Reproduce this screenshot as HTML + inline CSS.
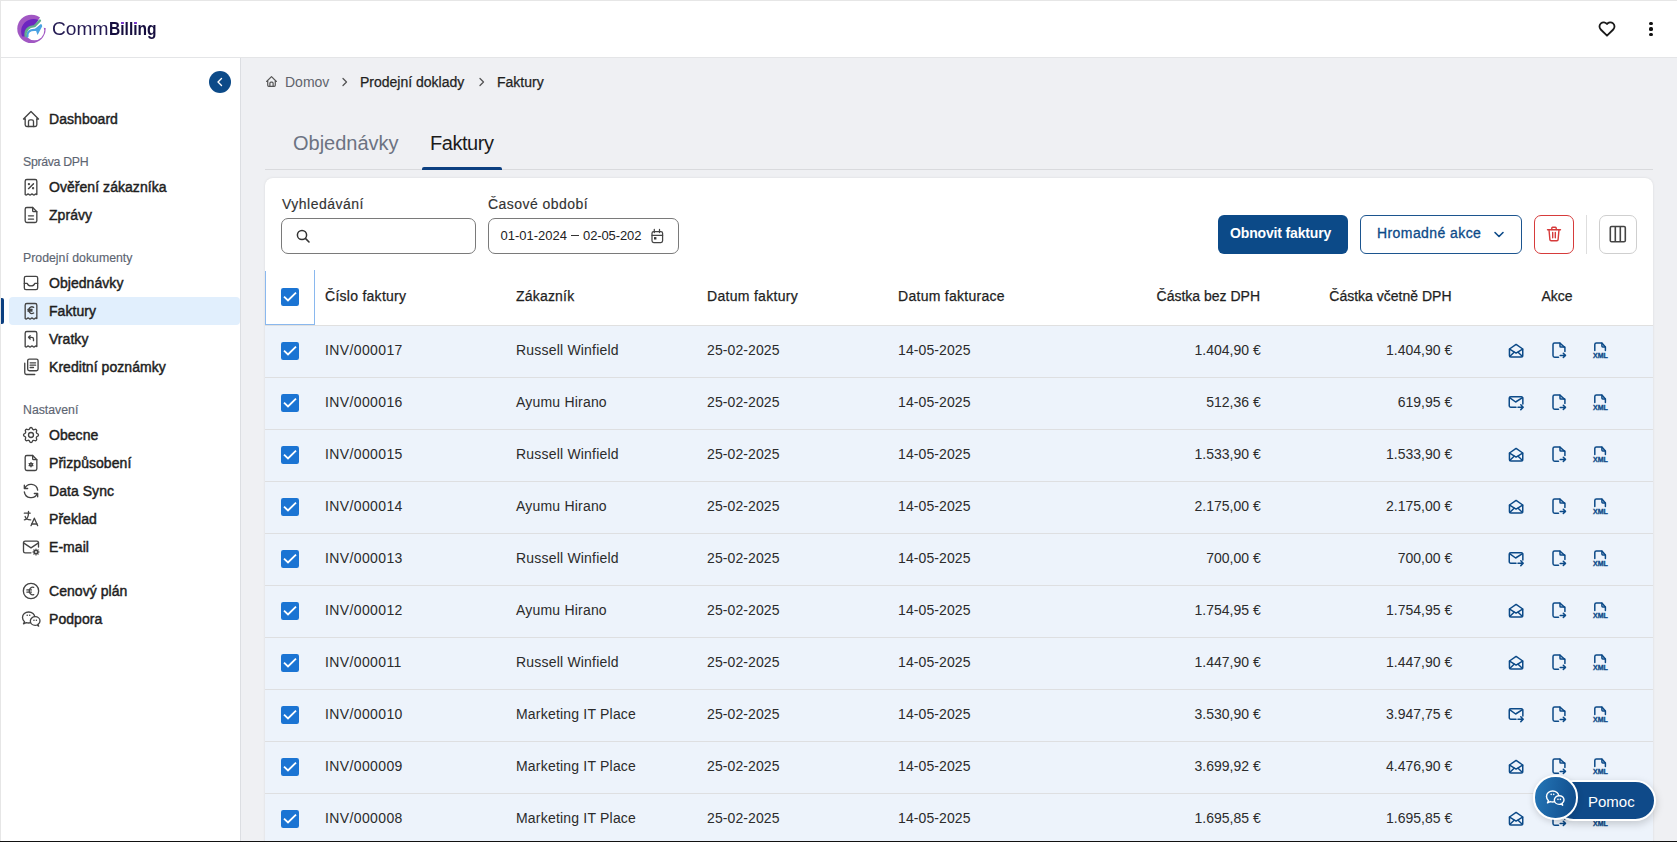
<!DOCTYPE html>
<html><head><meta charset="utf-8"><style>
*{box-sizing:border-box;margin:0;padding:0}
html,body{width:1677px;height:842px;overflow:hidden}
body{font-family:"Liberation Sans",sans-serif;background:#eff0f3;position:relative;color:#222}
.a{position:absolute;white-space:nowrap}
svg{display:block;overflow:visible}
.sb{fill:none;stroke:#444;stroke-width:1.6;stroke-linecap:round;stroke-linejoin:round}
.nt{font-size:14px;line-height:16px;color:#1e1e1e;-webkit-text-stroke:0.45px #1e1e1e;letter-spacing:0.05px}
.sec{font-size:12.3px;line-height:14px;color:#5d6572;-webkit-text-stroke:0.15px #5d6572}
.th{font-size:14px;line-height:16px;color:#1f1f1f;-webkit-text-stroke:0.25px #1f1f1f}
.td{font-size:14px;line-height:16px;color:#2b2b2b;letter-spacing:0.2px}
.cb{width:18px;height:18px;background:#1b74d3;border-radius:2px}
.ai{fill:none;stroke:#0c4a88;stroke-width:2;stroke-linecap:round;stroke-linejoin:round}
.ai2{fill:none;stroke:#0c4a88;stroke-width:1.5;stroke-linecap:round;stroke-linejoin:round}
</style></head><body>
<div class="a" style="left:0;top:0;width:1677px;height:1px;background:#e6e6e6"></div>
<div class="a" style="left:0;top:0;width:1px;height:842px;background:#e6e6e6"></div>
<div class="a" style="left:1px;top:1px;width:1676px;height:56px;background:#fff"></div>
<div class="a" style="left:1px;top:57px;width:1676px;height:1px;background:#e4e5e7"></div>
<div class="a" style="left:1px;top:58px;width:239px;height:783px;background:#fff"></div>
<div class="a" style="left:240px;top:58px;width:1px;height:783px;background:#dcdee2"></div>
<svg class="a" style="left:15px;top:13px" width="33" height="33" viewBox="0 0 842 842">
<defs><mask id="lm"><rect width="842" height="842" fill="#000"/><circle cx="420" cy="405" r="362" fill="#fff"/><polygon points="500,330 690,30 842,0 842,385 760,385" fill="#000"/></mask>
<clipPath id="lc"><path d="M272 585 C258 440 330 350 500 335 L635 195 L842 195 L842 842 L0 842 L0 585Z"/></clipPath></defs>
<g mask="url(#lm)"><rect width="842" height="842" fill="#a157c3"/><circle cx="475" cy="470" r="318" fill="#6c25c0"/><rect x="0" y="600" width="842" height="300" fill="#a157c3"/><rect x="600" y="380" width="300" height="500" fill="#a157c3"/><circle cx="497" cy="448" r="250" fill="#fff" clip-path="url(#lc)"/></g>
<path d="M318 605 C300 480 380 420 520 430 L665 315" fill="none" stroke="#4aa2e2" stroke-width="55" stroke-linecap="round"/>
<polygon points="520,410 660,285 695,340 575,560" fill="#4aa2e2"/>
<path d="M272 585 C258 440 330 350 500 335 L635 195" fill="none" stroke="#62ad8d" stroke-width="62" stroke-linecap="round"/>
</svg>
<div class="a" style="left:52px;top:18.70px;font-size:17.6px;line-height:20px;color:#241a52;transform:scaleX(1.09);transform-origin:0 0">Comm</div>
<div class="a" style="left:108.5px;top:18.70px;font-size:17.6px;line-height:20px;color:#150d3e;font-weight:bold;transform:scaleX(0.885);transform-origin:0 0">Billing</div>
<div class="a" style="left:120.6px;top:21.6px;width:3px;height:2.6px;background:#7a2fd6;border-radius:1px"></div>
<div class="a" style="left:133.6px;top:21.6px;width:3px;height:2.6px;background:#7a2fd6;border-radius:1px"></div>
<svg class="a" style="left:1597px;top:19px" width="20" height="20" viewBox="0 0 24 24"><path d="M19.5 12.572l-7.5 7.428l-7.5 -7.428a5 5 0 1 1 7.5 -6.566a5 5 0 1 1 7.5 6.572" fill="none" stroke="#1a1a1a" stroke-width="2.2" stroke-linecap="round" stroke-linejoin="round"/></svg>
<div class="a" style="left:1649.4px;top:21.599999999999998px;width:3.2px;height:3.2px;border-radius:50%;background:#111"></div>
<div class="a" style="left:1649.4px;top:27.4px;width:3.2px;height:3.2px;border-radius:50%;background:#111"></div>
<div class="a" style="left:1649.4px;top:33.199999999999996px;width:3.2px;height:3.2px;border-radius:50%;background:#111"></div>
<div class="a" style="left:209px;top:71px;width:22px;height:22px;border-radius:50%;background:#0c4a88"></div>
<svg class="a" style="left:209px;top:71px" width="22" height="22" viewBox="0 0 22 22"><path d="M12.5 7.5 L9 11 L12.5 14.5" fill="none" stroke="#fff" stroke-width="1.4" stroke-linecap="round" stroke-linejoin="round"/></svg>
<div class="a" style="left:9px;top:297px;width:231px;height:28px;background:#e1effd;border-radius:4px"></div>
<div class="a" style="left:1px;top:298px;width:3px;height:26px;background:#0c3f80;border-radius:0 2px 2px 0"></div>
<svg class="a sb" style="left:21px;top:109px" width="20" height="20" viewBox="0 0 24 24"><path d="M5 12l-2 0l9 -9l9 9l-2 0"/><path d="M5 12v7a2 2 0 0 0 2 2h10a2 2 0 0 0 2 -2v-7"/><path d="M9 21v-6a2 2 0 0 1 2 -2h2a2 2 0 0 1 2 2v6"/></svg>
<div class="a nt" style="left:49px;top:111.15px">Dashboard</div>
<div class="a sec" style="left:23px;top:154.84px;letter-spacing:-0.3px">Správa DPH</div>
<svg class="a sb" style="left:21px;top:177px" width="20" height="20" viewBox="0 0 24 24"><path d="M5 21v-16a2 2 0 0 1 2 -2h10a2 2 0 0 1 2 2v16q-1.17 -1.3 -2.33 0t-2.33 0t-2.33 0t-2.33 0t-2.33 0t-2.33 0"/><path d="M9 14l6 -6"/><circle cx="9.5" cy="8.5" r=".6"/><circle cx="14.5" cy="13.5" r=".6"/></svg>
<div class="a nt" style="left:49px;top:179.15px">Ověření zákazníka</div>
<svg class="a sb" style="left:21px;top:205px" width="20" height="20" viewBox="0 0 24 24"><path d="M14 3v4a1 1 0 0 0 1 1h4"/><path d="M17 21h-10a2 2 0 0 1 -2 -2v-14a2 2 0 0 1 2 -2h7l5 5v11a2 2 0 0 1 -2 2z"/><path d="M9 13l6 0"/><path d="M9 17l6 0"/></svg>
<div class="a nt" style="left:49px;top:207.15px">Zprávy</div>
<div class="a sec" style="left:23px;top:250.84px;letter-spacing:0">Prodejní dokumenty</div>
<svg class="a sb" style="left:21px;top:273px" width="20" height="20" viewBox="0 0 24 24"><path d="M4 6a2 2 0 0 1 2 -2h12a2 2 0 0 1 2 2v12a2 2 0 0 1 -2 2h-12a2 2 0 0 1 -2 -2z"/><path d="M4 12.5h3.5c.8 2.2 2.3 3 4.5 3s3.7 -.8 4.5 -3h3.5"/></svg>
<div class="a nt" style="left:49px;top:275.15px">Objednávky</div>
<svg class="a sb" style="left:21px;top:301px" width="20" height="20" viewBox="0 0 24 24"><path d="M5 21v-16a2 2 0 0 1 2 -2h10a2 2 0 0 1 2 2v16q-1.17 -1.3 -2.33 0t-2.33 0t-2.33 0t-2.33 0t-2.33 0t-2.33 0"/><path d="M15.2 7.6a3.8 4 0 1 0 0 6.8"/><path d="M8.3 10.2h5M8.3 12h5"/></svg>
<div class="a nt" style="left:49px;top:303.15px">Faktury</div>
<svg class="a sb" style="left:21px;top:329px" width="20" height="20" viewBox="0 0 24 24"><path d="M5 21v-16a2 2 0 0 1 2 -2h10a2 2 0 0 1 2 2v16q-1.17 -1.3 -2.33 0t-2.33 0t-2.33 0t-2.33 0t-2.33 0t-2.33 0"/><path d="M15 14v-2a2 2 0 0 0 -2 -2h-4l2 -2m-2 2l2 2"/></svg>
<div class="a nt" style="left:49px;top:331.15px">Vratky</div>
<svg class="a sb" style="left:21px;top:357px" width="20" height="20" viewBox="0 0 24 24"><path d="M8 4.5a2 2 0 0 1 2 -2h8.5a2 2 0 0 1 2 2v10a2 2 0 0 1 -2 2h-8.5a2 2 0 0 1 -2 -2z"/><path d="M4.5 7.5v11.5a2 2 0 0 0 2 2h10"/><path d="M11 7h6.5M11 9.8h6.5M11 12.6h4"/></svg>
<div class="a nt" style="left:49px;top:359.15px">Kreditní poznámky</div>
<div class="a sec" style="left:23px;top:402.84px;letter-spacing:0">Nastavení</div>
<svg class="a sb" style="left:21px;top:425px" width="20" height="20" viewBox="0 0 24 24"><path d="M10.325 4.317c.426 -1.756 2.924 -1.756 3.35 0a1.724 1.724 0 0 0 2.573 1.066c1.543 -.94 3.31 .826 2.37 2.37a1.724 1.724 0 0 0 1.065 2.572c1.756 .426 1.756 2.924 0 3.35a1.724 1.724 0 0 0 -1.066 2.573c.94 1.543 -.826 3.31 -2.37 2.37a1.724 1.724 0 0 0 -2.572 1.065c-.426 1.756 -2.924 1.756 -3.35 0a1.724 1.724 0 0 0 -2.573 -1.066c-1.543 .94 -3.31 -.826 -2.37 -2.37a1.724 1.724 0 0 0 -1.065 -2.572c-1.756 -.426 -1.756 -2.924 0 -3.35a1.724 1.724 0 0 0 1.066 -2.573c-.94 -1.543 .826 -3.31 2.37 -2.37c1 .608 2.296 .07 2.572 -1.065z"/><circle cx="12" cy="12" r="3"/></svg>
<div class="a nt" style="left:49px;top:427.15px">Obecne</div>
<svg class="a sb" style="left:21px;top:453px" width="20" height="20" viewBox="0 0 24 24"><path d="M14 3v4a1 1 0 0 0 1 1h4"/><path d="M17 21h-10a2 2 0 0 1 -2 -2v-14a2 2 0 0 1 2 -2h7l5 5v11a2 2 0 0 1 -2 2z"/><circle cx="12" cy="14" r="1.5"/><path d="M12 11.5v1M12 15.5v1M9.8 12.8l.9 .5M13.3 14.7l.9 .5M9.8 15.2l.9 -.5M13.3 13.3l.9 -.5"/></svg>
<div class="a nt" style="left:49px;top:455.15px">Přizpůsobení</div>
<svg class="a sb" style="left:21px;top:481px" width="20" height="20" viewBox="0 0 24 24"><path d="M20 11a8.1 8.1 0 0 0 -15.5 -2m-.5 -4v4h4"/><path d="M4 13a8.1 8.1 0 0 0 15.5 2m.5 4v-4h-4"/></svg>
<div class="a nt" style="left:49px;top:483.15px">Data Sync</div>
<svg class="a sb" style="left:21px;top:509px" width="20" height="20" viewBox="0 0 24 24"><path d="M4 5h7"/><path d="M9 3v2c0 4.418 -2.239 8 -5 8"/><path d="M5 9c0 2.144 2.952 3.908 6.7 4"/><path d="M12 20l4 -9l4 9"/><path d="M19.1 18h-6.2"/></svg>
<div class="a nt" style="left:49px;top:511.15px">Překlad</div>
<svg class="a sb" style="left:21px;top:537px" width="20" height="20" viewBox="0 0 24 24"><path d="M12 19h-7a2 2 0 0 1 -2 -2v-10a2 2 0 0 1 2 -2h14a2 2 0 0 1 2 2v5"/><path d="M3 7l9 6l9 -6"/><circle cx="18" cy="18" r="2"/><path d="M18 14.5v1.5M18 20v1.5M21.5 18h-1.5M16 18h-1.5M15.5 15.5l1 1M19.5 19.5l1 1M15.5 20.5l1 -1M19.5 16.5l1 -1"/></svg>
<div class="a nt" style="left:49px;top:539.15px">E-mail</div>
<svg class="a sb" style="left:21px;top:581px" width="20" height="20" viewBox="0 0 24 24"><circle cx="12" cy="12" r="9.2"/><path d="M15.3 7.6a4.2 4.6 0 1 0 0 8.8"/><path d="M7 10.7h5.5M7 13.3h5.5"/></svg>
<div class="a nt" style="left:49px;top:583.15px">Cenový plán</div>
<svg class="a sb" style="left:21px;top:609px" width="20" height="20" viewBox="0 0 24 24"><path d="M3 17.8l1.2 -2.6c-1.6 -1.4 -2.4 -3.1 -2.4 -5c0 -3.7 3.3 -6.6 7.4 -6.6s7.4 2.9 7.4 6.6c0 3.7 -3.3 6.6 -7.4 6.6c-1 0 -2 -.2 -2.9 -.5z"/><path d="M21.2 20.6l-.8 -2.2c1.5 -1 2.4 -2.4 2.4 -4c0 -3 -2.6 -5.2 -5.8 -5.2s-5.8 2.3 -5.8 5.2s2.6 5.2 5.8 5.2c.8 0 1.6 -.1 2.3 -.4z" fill="#fff"/><path d="M7.4 7.6h.1M10.4 7.6h.1M15.5 13.6h.1M18.4 13.6h.1" stroke-width="1.8"/></svg>
<div class="a nt" style="left:49px;top:611.15px">Podpora</div>
<!--MAIN-->
<svg class="a" style="left:265px;top:75px" width="13" height="13" viewBox="0 0 24 24" fill="none" stroke="#555" stroke-width="2.2" stroke-linecap="round" stroke-linejoin="round"><path d="M5 12l-2 0l9 -9l9 9l-2 0"/><path d="M5 12v7a2 2 0 0 0 2 2h10a2 2 0 0 0 2 -2v-7"/><path d="M9 21v-6a2 2 0 0 1 2 -2h2a2 2 0 0 1 2 2v6"/></svg>
<div class="a" style="left:285px;top:74.15px;font-size:14px;line-height:16px;color:#60636b">Domov</div>
<svg class="a" style="left:339px;top:76px" width="12" height="12" viewBox="0 0 12 12"><path d="M4 2.5 L7.5 6 L4 9.5" fill="none" stroke="#555" stroke-width="1.3" stroke-linecap="round" stroke-linejoin="round"/></svg>
<div class="a" style="left:360px;top:74.15px;font-size:14px;line-height:16px;color:#1f1f1f;-webkit-text-stroke:0.25px #1f1f1f">Prodejní doklady</div>
<svg class="a" style="left:476px;top:76px" width="12" height="12" viewBox="0 0 12 12"><path d="M4 2.5 L7.5 6 L4 9.5" fill="none" stroke="#555" stroke-width="1.3" stroke-linecap="round" stroke-linejoin="round"/></svg>
<div class="a" style="left:497px;top:74.15px;font-size:14px;line-height:16px;color:#1f1f1f;-webkit-text-stroke:0.25px #1f1f1f">Faktury</div>
<div class="a" style="left:293px;top:131.07px;font-size:20px;line-height:24px;color:#6c7382">Objednávky</div>
<div class="a" style="left:430px;top:131.07px;font-size:20px;line-height:24px;color:#1b1b1b;letter-spacing:-0.45px">Faktury</div>
<div class="a" style="left:265px;top:169px;width:1388px;height:1px;background:#d9dadd"></div>
<div class="a" style="left:422px;top:167px;width:80px;height:3px;background:#0c3f80;border-radius:2px 2px 0 0"></div>
<div class="a" style="left:265px;top:178px;width:1388px;height:680px;background:#fff;border-radius:8px;box-shadow:0 0 2.5px rgba(0,0,0,.1)"></div>
<div class="a" style="left:282px;top:196.15px;font-size:14px;line-height:16px;color:#333;letter-spacing:0.48px;-webkit-text-stroke:0.15px #333">Vyhledávání</div>
<div class="a" style="left:488px;top:196.15px;font-size:14px;line-height:16px;color:#333;letter-spacing:0.46px;-webkit-text-stroke:0.15px #333">Časové období</div>
<div class="a" style="left:281px;top:218px;width:195px;height:36px;border:1px solid #7a7a7a;border-radius:7px"></div>
<svg class="a" style="left:294.5px;top:227.5px" width="16" height="16" viewBox="0 0 16 16"><circle cx="7" cy="7" r="4.6" fill="none" stroke="#333" stroke-width="1.5"/><path d="M10.4 10.4 L14 14" stroke="#333" stroke-width="1.6" stroke-linecap="round"/></svg>
<div class="a" style="left:488px;top:218px;width:191px;height:36px;border:1px solid #7a7a7a;border-radius:7px"></div>
<div class="a" style="left:500.5px;top:227.50px;font-size:13px;line-height:16px;color:#222">01-01-2024</div>
<div class="a" style="left:570.5px;top:235px;width:8.5px;height:1.1px;background:#333"></div>
<div class="a" style="left:583px;top:227.50px;font-size:13px;line-height:16px;color:#222;letter-spacing:-0.1px">02-05-202</div>
<svg class="a" style="left:645px;top:225px" width="24" height="22" viewBox="0 0 24 22" fill="none" stroke="#444" stroke-width="1.25" stroke-linecap="round"><rect x="7" y="6.6" width="10.6" height="10.9" rx="1.7"/><path d="M7 10.3H17.6M9.3 4.4V7.6M14.5 4.4V7.6"/><rect x="9" y="12.1" width="2.4" height="2.4" fill="#333" stroke="none"/></svg>
<div class="a" style="left:1218px;top:215px;width:130px;height:39px;background:#0c4a88;border-radius:6px"></div>
<div class="a" style="left:1230px;top:225.15px;font-size:14px;line-height:16px;color:#fff;font-weight:bold;letter-spacing:-0.15px">Obnovit faktury</div>
<div class="a" style="left:1360px;top:215px;width:162px;height:39px;border:1px solid #1c558f;border-radius:6px"></div>
<div class="a" style="left:1377px;top:225.15px;font-size:14px;line-height:16px;color:#0c4a88;-webkit-text-stroke:0.3px #0c4a88;letter-spacing:0.42px">Hromadné akce</div>
<svg class="a" style="left:1492px;top:226.5px" width="14" height="14" viewBox="0 0 14 14"><path d="M3 5.5 L7 9.5 L11 5.5" fill="none" stroke="#0c4a88" stroke-width="1.6" stroke-linecap="round" stroke-linejoin="round"/></svg>
<div class="a" style="left:1534px;top:215px;width:40px;height:39px;border:1px solid #d63b3b;border-radius:7px"></div>
<svg class="a" style="left:1545px;top:225px" width="18" height="18" viewBox="0 0 18 18" fill="none" stroke="#d63b3b" stroke-width="1.4" stroke-linecap="round" stroke-linejoin="round"><path d="M2.5 4.8h13"/><path d="M6.8 4.6v-1.6a.8 .8 0 0 1 .8 -.8h2.8a.8 .8 0 0 1 .8 .8v1.6"/><path d="M4 4.8l.9 9.8a1.2 1.2 0 0 0 1.2 1.1h5.8a1.2 1.2 0 0 0 1.2 -1.1l.9 -9.8"/><path d="M7.7 7.5v5.2M10.3 7.5v5.2"/></svg>
<div class="a" style="left:1586px;top:215px;width:1px;height:39px;background:#dedede"></div>
<div class="a" style="left:1599px;top:215px;width:38px;height:39px;border:1px solid #cfcfcf;border-radius:7px"></div>
<svg class="a" style="left:1609px;top:225px" width="18" height="18" viewBox="0 0 18 18" fill="none" stroke="#444" stroke-width="1.6" stroke-linejoin="round"><rect x="1.3" y="1.5" width="15" height="15.2" rx="1.3"/><path d="M6.3 1.5v15.2M11.3 1.5v15.2"/></svg>
<div class="a" style="left:265px;top:271px;width:1px;height:54px;background:#8ab8ee"></div><div class="a" style="left:314px;top:270px;width:1px;height:55px;background:#8ab8ee"></div><div class="a" style="left:265px;top:324px;width:50px;height:1px;background:#8ab8ee"></div>
<div class="a" style="left:265px;top:325px;width:1388px;height:1px;background:#e0e0e0"></div>
<div class="a" style="left:281px;top:288px"><svg width="18" height="18" viewBox="0 0 18 18"><rect width="18" height="18" rx="2.2" fill="#1b74d3"/><path d="M3 8.7 L7 12.5 L15 4.6" fill="none" stroke="#fff" stroke-width="1.85"/></svg></div>
<div class="a th" style="left:325px;top:288.15px;letter-spacing:0.27px">Číslo faktury</div>
<div class="a th" style="left:516px;top:288.15px;letter-spacing:0.2px">Zákazník</div>
<div class="a th" style="left:707px;top:288.15px;letter-spacing:0.3px">Datum faktury</div>
<div class="a th" style="left:898px;top:288.15px;letter-spacing:0.28px">Datum fakturace</div>
<div class="a th" style="right:417px;top:288.15px">Částka bez DPH</div>
<div class="a th" style="right:225.5px;top:288.15px">Částka včetně DPH</div>
<div class="a th" style="left:1541.5px;top:288.15px">Akce</div>
<div class="a" style="left:265px;top:326px;width:1388px;height:51px;background:#edf3fb"></div>
<div class="a" style="left:265px;top:377px;width:1388px;height:1px;background:#dedfe1"></div>
<div class="a" style="left:281px;top:342px"><svg width="18" height="18" viewBox="0 0 18 18"><rect width="18" height="18" rx="2.2" fill="#1b74d3"/><path d="M3 8.7 L7 12.5 L15 4.6" fill="none" stroke="#fff" stroke-width="1.85"/></svg></div>
<div class="a td" style="left:325px;top:342.15px;letter-spacing:0.38px">INV/000017</div>
<div class="a td" style="left:516px;top:342.15px">Russell Winfield</div>
<div class="a td" style="left:707px;top:342.15px;letter-spacing:0.1px">25-02-2025</div>
<div class="a td" style="left:898px;top:342.15px;letter-spacing:0.1px">14-05-2025</div>
<div class="a td" style="right:416.29999999999995px;top:342.15px;letter-spacing:0">1.404,90 €</div>
<div class="a td" style="right:224.79999999999995px;top:342.15px;letter-spacing:0">1.404,90 €</div>
<svg class="a ai2" style="left:1507px;top:342px" width="18" height="18" viewBox="0 0 18 18"><path d="M2.45 7L9.1 2.45L15.75 7V13.45a1.5 1.5 0 0 1 -1.5 1.5H3.95a1.5 1.5 0 0 1 -1.5 -1.5Z"/><path d="M2.6 7.1L9.1 11.1L15.6 7.1"/><path d="M2.7 14.5L7.1 10.3M11.1 10.3L15.5 14.5"/></svg>
<svg class="a ai2" style="left:1552px;top:342px" width="17" height="17" viewBox="0 0 17 17"><path d="M6.5 15.2H2.6a1.6 1.6 0 0 1 -1.6 -1.6V2.6a1.6 1.6 0 0 1 1.6 -1.6H7.9L12.9 5.6V9.6"/><path d="M8 1.2V4.3a.8 .8 0 0 0 .8 .8H12.7"/><path d="M8.2 13.4H13.4M11.3 11.3L13.5 13.4L11.3 15.5"/></svg>
<svg class="a" style="left:1592px;top:342px" width="17" height="17" viewBox="0 0 17 17"><path class="ai2" d="M2.8 8.6V2.6a1.6 1.6 0 0 1 1.6 -1.6H9.9L13.4 4.9V8.6"/><path class="ai2" d="M9.9 1.2V4.1a.8 .8 0 0 0 .8 .8H13.2"/><text x="1" y="16" textLength="14.8" lengthAdjust="spacingAndGlyphs" font-size="7.4" font-weight="bold" fill="#0c4a88" stroke="#0c4a88" stroke-width="0.35" font-family="Liberation Sans">XML</text></svg>
<div class="a" style="left:265px;top:378px;width:1388px;height:51px;background:#edf3fb"></div>
<div class="a" style="left:265px;top:429px;width:1388px;height:1px;background:#dedfe1"></div>
<div class="a" style="left:281px;top:394px"><svg width="18" height="18" viewBox="0 0 18 18"><rect width="18" height="18" rx="2.2" fill="#1b74d3"/><path d="M3 8.7 L7 12.5 L15 4.6" fill="none" stroke="#fff" stroke-width="1.85"/></svg></div>
<div class="a td" style="left:325px;top:394.15px;letter-spacing:0.38px">INV/000016</div>
<div class="a td" style="left:516px;top:394.15px">Ayumu Hirano</div>
<div class="a td" style="left:707px;top:394.15px;letter-spacing:0.1px">25-02-2025</div>
<div class="a td" style="left:898px;top:394.15px;letter-spacing:0.1px">14-05-2025</div>
<div class="a td" style="right:416.29999999999995px;top:394.15px;letter-spacing:0">512,36 €</div>
<div class="a td" style="right:224.79999999999995px;top:394.15px;letter-spacing:0">619,95 €</div>
<svg class="a ai2" style="left:1507px;top:394px" width="18" height="18" viewBox="0 0 18 18"><path d="M9 13.25H3.75a1.5 1.5 0 0 1 -1.5 -1.5V4.25a1.5 1.5 0 0 1 1.5 -1.5H14.35a1.5 1.5 0 0 1 1.5 1.5V10"/><path d="M2.6 3.6L8.6 8L15.5 3.6"/><path d="M11 13.2H16.1M13.8 10.8L16.2 13.2L13.8 15.6"/></svg>
<svg class="a ai2" style="left:1552px;top:394px" width="17" height="17" viewBox="0 0 17 17"><path d="M6.5 15.2H2.6a1.6 1.6 0 0 1 -1.6 -1.6V2.6a1.6 1.6 0 0 1 1.6 -1.6H7.9L12.9 5.6V9.6"/><path d="M8 1.2V4.3a.8 .8 0 0 0 .8 .8H12.7"/><path d="M8.2 13.4H13.4M11.3 11.3L13.5 13.4L11.3 15.5"/></svg>
<svg class="a" style="left:1592px;top:394px" width="17" height="17" viewBox="0 0 17 17"><path class="ai2" d="M2.8 8.6V2.6a1.6 1.6 0 0 1 1.6 -1.6H9.9L13.4 4.9V8.6"/><path class="ai2" d="M9.9 1.2V4.1a.8 .8 0 0 0 .8 .8H13.2"/><text x="1" y="16" textLength="14.8" lengthAdjust="spacingAndGlyphs" font-size="7.4" font-weight="bold" fill="#0c4a88" stroke="#0c4a88" stroke-width="0.35" font-family="Liberation Sans">XML</text></svg>
<div class="a" style="left:265px;top:430px;width:1388px;height:51px;background:#edf3fb"></div>
<div class="a" style="left:265px;top:481px;width:1388px;height:1px;background:#dedfe1"></div>
<div class="a" style="left:281px;top:446px"><svg width="18" height="18" viewBox="0 0 18 18"><rect width="18" height="18" rx="2.2" fill="#1b74d3"/><path d="M3 8.7 L7 12.5 L15 4.6" fill="none" stroke="#fff" stroke-width="1.85"/></svg></div>
<div class="a td" style="left:325px;top:446.15px;letter-spacing:0.38px">INV/000015</div>
<div class="a td" style="left:516px;top:446.15px">Russell Winfield</div>
<div class="a td" style="left:707px;top:446.15px;letter-spacing:0.1px">25-02-2025</div>
<div class="a td" style="left:898px;top:446.15px;letter-spacing:0.1px">14-05-2025</div>
<div class="a td" style="right:416.29999999999995px;top:446.15px;letter-spacing:0">1.533,90 €</div>
<div class="a td" style="right:224.79999999999995px;top:446.15px;letter-spacing:0">1.533,90 €</div>
<svg class="a ai2" style="left:1507px;top:446px" width="18" height="18" viewBox="0 0 18 18"><path d="M2.45 7L9.1 2.45L15.75 7V13.45a1.5 1.5 0 0 1 -1.5 1.5H3.95a1.5 1.5 0 0 1 -1.5 -1.5Z"/><path d="M2.6 7.1L9.1 11.1L15.6 7.1"/><path d="M2.7 14.5L7.1 10.3M11.1 10.3L15.5 14.5"/></svg>
<svg class="a ai2" style="left:1552px;top:446px" width="17" height="17" viewBox="0 0 17 17"><path d="M6.5 15.2H2.6a1.6 1.6 0 0 1 -1.6 -1.6V2.6a1.6 1.6 0 0 1 1.6 -1.6H7.9L12.9 5.6V9.6"/><path d="M8 1.2V4.3a.8 .8 0 0 0 .8 .8H12.7"/><path d="M8.2 13.4H13.4M11.3 11.3L13.5 13.4L11.3 15.5"/></svg>
<svg class="a" style="left:1592px;top:446px" width="17" height="17" viewBox="0 0 17 17"><path class="ai2" d="M2.8 8.6V2.6a1.6 1.6 0 0 1 1.6 -1.6H9.9L13.4 4.9V8.6"/><path class="ai2" d="M9.9 1.2V4.1a.8 .8 0 0 0 .8 .8H13.2"/><text x="1" y="16" textLength="14.8" lengthAdjust="spacingAndGlyphs" font-size="7.4" font-weight="bold" fill="#0c4a88" stroke="#0c4a88" stroke-width="0.35" font-family="Liberation Sans">XML</text></svg>
<div class="a" style="left:265px;top:482px;width:1388px;height:51px;background:#edf3fb"></div>
<div class="a" style="left:265px;top:533px;width:1388px;height:1px;background:#dedfe1"></div>
<div class="a" style="left:281px;top:498px"><svg width="18" height="18" viewBox="0 0 18 18"><rect width="18" height="18" rx="2.2" fill="#1b74d3"/><path d="M3 8.7 L7 12.5 L15 4.6" fill="none" stroke="#fff" stroke-width="1.85"/></svg></div>
<div class="a td" style="left:325px;top:498.15px;letter-spacing:0.38px">INV/000014</div>
<div class="a td" style="left:516px;top:498.15px">Ayumu Hirano</div>
<div class="a td" style="left:707px;top:498.15px;letter-spacing:0.1px">25-02-2025</div>
<div class="a td" style="left:898px;top:498.15px;letter-spacing:0.1px">14-05-2025</div>
<div class="a td" style="right:416.29999999999995px;top:498.15px;letter-spacing:0">2.175,00 €</div>
<div class="a td" style="right:224.79999999999995px;top:498.15px;letter-spacing:0">2.175,00 €</div>
<svg class="a ai2" style="left:1507px;top:498px" width="18" height="18" viewBox="0 0 18 18"><path d="M2.45 7L9.1 2.45L15.75 7V13.45a1.5 1.5 0 0 1 -1.5 1.5H3.95a1.5 1.5 0 0 1 -1.5 -1.5Z"/><path d="M2.6 7.1L9.1 11.1L15.6 7.1"/><path d="M2.7 14.5L7.1 10.3M11.1 10.3L15.5 14.5"/></svg>
<svg class="a ai2" style="left:1552px;top:498px" width="17" height="17" viewBox="0 0 17 17"><path d="M6.5 15.2H2.6a1.6 1.6 0 0 1 -1.6 -1.6V2.6a1.6 1.6 0 0 1 1.6 -1.6H7.9L12.9 5.6V9.6"/><path d="M8 1.2V4.3a.8 .8 0 0 0 .8 .8H12.7"/><path d="M8.2 13.4H13.4M11.3 11.3L13.5 13.4L11.3 15.5"/></svg>
<svg class="a" style="left:1592px;top:498px" width="17" height="17" viewBox="0 0 17 17"><path class="ai2" d="M2.8 8.6V2.6a1.6 1.6 0 0 1 1.6 -1.6H9.9L13.4 4.9V8.6"/><path class="ai2" d="M9.9 1.2V4.1a.8 .8 0 0 0 .8 .8H13.2"/><text x="1" y="16" textLength="14.8" lengthAdjust="spacingAndGlyphs" font-size="7.4" font-weight="bold" fill="#0c4a88" stroke="#0c4a88" stroke-width="0.35" font-family="Liberation Sans">XML</text></svg>
<div class="a" style="left:265px;top:534px;width:1388px;height:51px;background:#edf3fb"></div>
<div class="a" style="left:265px;top:585px;width:1388px;height:1px;background:#dedfe1"></div>
<div class="a" style="left:281px;top:550px"><svg width="18" height="18" viewBox="0 0 18 18"><rect width="18" height="18" rx="2.2" fill="#1b74d3"/><path d="M3 8.7 L7 12.5 L15 4.6" fill="none" stroke="#fff" stroke-width="1.85"/></svg></div>
<div class="a td" style="left:325px;top:550.15px;letter-spacing:0.38px">INV/000013</div>
<div class="a td" style="left:516px;top:550.15px">Russell Winfield</div>
<div class="a td" style="left:707px;top:550.15px;letter-spacing:0.1px">25-02-2025</div>
<div class="a td" style="left:898px;top:550.15px;letter-spacing:0.1px">14-05-2025</div>
<div class="a td" style="right:416.29999999999995px;top:550.15px;letter-spacing:0">700,00 €</div>
<div class="a td" style="right:224.79999999999995px;top:550.15px;letter-spacing:0">700,00 €</div>
<svg class="a ai2" style="left:1507px;top:550px" width="18" height="18" viewBox="0 0 18 18"><path d="M9 13.25H3.75a1.5 1.5 0 0 1 -1.5 -1.5V4.25a1.5 1.5 0 0 1 1.5 -1.5H14.35a1.5 1.5 0 0 1 1.5 1.5V10"/><path d="M2.6 3.6L8.6 8L15.5 3.6"/><path d="M11 13.2H16.1M13.8 10.8L16.2 13.2L13.8 15.6"/></svg>
<svg class="a ai2" style="left:1552px;top:550px" width="17" height="17" viewBox="0 0 17 17"><path d="M6.5 15.2H2.6a1.6 1.6 0 0 1 -1.6 -1.6V2.6a1.6 1.6 0 0 1 1.6 -1.6H7.9L12.9 5.6V9.6"/><path d="M8 1.2V4.3a.8 .8 0 0 0 .8 .8H12.7"/><path d="M8.2 13.4H13.4M11.3 11.3L13.5 13.4L11.3 15.5"/></svg>
<svg class="a" style="left:1592px;top:550px" width="17" height="17" viewBox="0 0 17 17"><path class="ai2" d="M2.8 8.6V2.6a1.6 1.6 0 0 1 1.6 -1.6H9.9L13.4 4.9V8.6"/><path class="ai2" d="M9.9 1.2V4.1a.8 .8 0 0 0 .8 .8H13.2"/><text x="1" y="16" textLength="14.8" lengthAdjust="spacingAndGlyphs" font-size="7.4" font-weight="bold" fill="#0c4a88" stroke="#0c4a88" stroke-width="0.35" font-family="Liberation Sans">XML</text></svg>
<div class="a" style="left:265px;top:586px;width:1388px;height:51px;background:#edf3fb"></div>
<div class="a" style="left:265px;top:637px;width:1388px;height:1px;background:#dedfe1"></div>
<div class="a" style="left:281px;top:602px"><svg width="18" height="18" viewBox="0 0 18 18"><rect width="18" height="18" rx="2.2" fill="#1b74d3"/><path d="M3 8.7 L7 12.5 L15 4.6" fill="none" stroke="#fff" stroke-width="1.85"/></svg></div>
<div class="a td" style="left:325px;top:602.15px;letter-spacing:0.38px">INV/000012</div>
<div class="a td" style="left:516px;top:602.15px">Ayumu Hirano</div>
<div class="a td" style="left:707px;top:602.15px;letter-spacing:0.1px">25-02-2025</div>
<div class="a td" style="left:898px;top:602.15px;letter-spacing:0.1px">14-05-2025</div>
<div class="a td" style="right:416.29999999999995px;top:602.15px;letter-spacing:0">1.754,95 €</div>
<div class="a td" style="right:224.79999999999995px;top:602.15px;letter-spacing:0">1.754,95 €</div>
<svg class="a ai2" style="left:1507px;top:602px" width="18" height="18" viewBox="0 0 18 18"><path d="M2.45 7L9.1 2.45L15.75 7V13.45a1.5 1.5 0 0 1 -1.5 1.5H3.95a1.5 1.5 0 0 1 -1.5 -1.5Z"/><path d="M2.6 7.1L9.1 11.1L15.6 7.1"/><path d="M2.7 14.5L7.1 10.3M11.1 10.3L15.5 14.5"/></svg>
<svg class="a ai2" style="left:1552px;top:602px" width="17" height="17" viewBox="0 0 17 17"><path d="M6.5 15.2H2.6a1.6 1.6 0 0 1 -1.6 -1.6V2.6a1.6 1.6 0 0 1 1.6 -1.6H7.9L12.9 5.6V9.6"/><path d="M8 1.2V4.3a.8 .8 0 0 0 .8 .8H12.7"/><path d="M8.2 13.4H13.4M11.3 11.3L13.5 13.4L11.3 15.5"/></svg>
<svg class="a" style="left:1592px;top:602px" width="17" height="17" viewBox="0 0 17 17"><path class="ai2" d="M2.8 8.6V2.6a1.6 1.6 0 0 1 1.6 -1.6H9.9L13.4 4.9V8.6"/><path class="ai2" d="M9.9 1.2V4.1a.8 .8 0 0 0 .8 .8H13.2"/><text x="1" y="16" textLength="14.8" lengthAdjust="spacingAndGlyphs" font-size="7.4" font-weight="bold" fill="#0c4a88" stroke="#0c4a88" stroke-width="0.35" font-family="Liberation Sans">XML</text></svg>
<div class="a" style="left:265px;top:638px;width:1388px;height:51px;background:#edf3fb"></div>
<div class="a" style="left:265px;top:689px;width:1388px;height:1px;background:#dedfe1"></div>
<div class="a" style="left:281px;top:654px"><svg width="18" height="18" viewBox="0 0 18 18"><rect width="18" height="18" rx="2.2" fill="#1b74d3"/><path d="M3 8.7 L7 12.5 L15 4.6" fill="none" stroke="#fff" stroke-width="1.85"/></svg></div>
<div class="a td" style="left:325px;top:654.15px;letter-spacing:0.38px">INV/000011</div>
<div class="a td" style="left:516px;top:654.15px">Russell Winfield</div>
<div class="a td" style="left:707px;top:654.15px;letter-spacing:0.1px">25-02-2025</div>
<div class="a td" style="left:898px;top:654.15px;letter-spacing:0.1px">14-05-2025</div>
<div class="a td" style="right:416.29999999999995px;top:654.15px;letter-spacing:0">1.447,90 €</div>
<div class="a td" style="right:224.79999999999995px;top:654.15px;letter-spacing:0">1.447,90 €</div>
<svg class="a ai2" style="left:1507px;top:654px" width="18" height="18" viewBox="0 0 18 18"><path d="M2.45 7L9.1 2.45L15.75 7V13.45a1.5 1.5 0 0 1 -1.5 1.5H3.95a1.5 1.5 0 0 1 -1.5 -1.5Z"/><path d="M2.6 7.1L9.1 11.1L15.6 7.1"/><path d="M2.7 14.5L7.1 10.3M11.1 10.3L15.5 14.5"/></svg>
<svg class="a ai2" style="left:1552px;top:654px" width="17" height="17" viewBox="0 0 17 17"><path d="M6.5 15.2H2.6a1.6 1.6 0 0 1 -1.6 -1.6V2.6a1.6 1.6 0 0 1 1.6 -1.6H7.9L12.9 5.6V9.6"/><path d="M8 1.2V4.3a.8 .8 0 0 0 .8 .8H12.7"/><path d="M8.2 13.4H13.4M11.3 11.3L13.5 13.4L11.3 15.5"/></svg>
<svg class="a" style="left:1592px;top:654px" width="17" height="17" viewBox="0 0 17 17"><path class="ai2" d="M2.8 8.6V2.6a1.6 1.6 0 0 1 1.6 -1.6H9.9L13.4 4.9V8.6"/><path class="ai2" d="M9.9 1.2V4.1a.8 .8 0 0 0 .8 .8H13.2"/><text x="1" y="16" textLength="14.8" lengthAdjust="spacingAndGlyphs" font-size="7.4" font-weight="bold" fill="#0c4a88" stroke="#0c4a88" stroke-width="0.35" font-family="Liberation Sans">XML</text></svg>
<div class="a" style="left:265px;top:690px;width:1388px;height:51px;background:#edf3fb"></div>
<div class="a" style="left:265px;top:741px;width:1388px;height:1px;background:#dedfe1"></div>
<div class="a" style="left:281px;top:706px"><svg width="18" height="18" viewBox="0 0 18 18"><rect width="18" height="18" rx="2.2" fill="#1b74d3"/><path d="M3 8.7 L7 12.5 L15 4.6" fill="none" stroke="#fff" stroke-width="1.85"/></svg></div>
<div class="a td" style="left:325px;top:706.15px;letter-spacing:0.38px">INV/000010</div>
<div class="a td" style="left:516px;top:706.15px">Marketing IT Place</div>
<div class="a td" style="left:707px;top:706.15px;letter-spacing:0.1px">25-02-2025</div>
<div class="a td" style="left:898px;top:706.15px;letter-spacing:0.1px">14-05-2025</div>
<div class="a td" style="right:416.29999999999995px;top:706.15px;letter-spacing:0">3.530,90 €</div>
<div class="a td" style="right:224.79999999999995px;top:706.15px;letter-spacing:0">3.947,75 €</div>
<svg class="a ai2" style="left:1507px;top:706px" width="18" height="18" viewBox="0 0 18 18"><path d="M9 13.25H3.75a1.5 1.5 0 0 1 -1.5 -1.5V4.25a1.5 1.5 0 0 1 1.5 -1.5H14.35a1.5 1.5 0 0 1 1.5 1.5V10"/><path d="M2.6 3.6L8.6 8L15.5 3.6"/><path d="M11 13.2H16.1M13.8 10.8L16.2 13.2L13.8 15.6"/></svg>
<svg class="a ai2" style="left:1552px;top:706px" width="17" height="17" viewBox="0 0 17 17"><path d="M6.5 15.2H2.6a1.6 1.6 0 0 1 -1.6 -1.6V2.6a1.6 1.6 0 0 1 1.6 -1.6H7.9L12.9 5.6V9.6"/><path d="M8 1.2V4.3a.8 .8 0 0 0 .8 .8H12.7"/><path d="M8.2 13.4H13.4M11.3 11.3L13.5 13.4L11.3 15.5"/></svg>
<svg class="a" style="left:1592px;top:706px" width="17" height="17" viewBox="0 0 17 17"><path class="ai2" d="M2.8 8.6V2.6a1.6 1.6 0 0 1 1.6 -1.6H9.9L13.4 4.9V8.6"/><path class="ai2" d="M9.9 1.2V4.1a.8 .8 0 0 0 .8 .8H13.2"/><text x="1" y="16" textLength="14.8" lengthAdjust="spacingAndGlyphs" font-size="7.4" font-weight="bold" fill="#0c4a88" stroke="#0c4a88" stroke-width="0.35" font-family="Liberation Sans">XML</text></svg>
<div class="a" style="left:265px;top:742px;width:1388px;height:51px;background:#edf3fb"></div>
<div class="a" style="left:265px;top:793px;width:1388px;height:1px;background:#dedfe1"></div>
<div class="a" style="left:281px;top:758px"><svg width="18" height="18" viewBox="0 0 18 18"><rect width="18" height="18" rx="2.2" fill="#1b74d3"/><path d="M3 8.7 L7 12.5 L15 4.6" fill="none" stroke="#fff" stroke-width="1.85"/></svg></div>
<div class="a td" style="left:325px;top:758.15px;letter-spacing:0.38px">INV/000009</div>
<div class="a td" style="left:516px;top:758.15px">Marketing IT Place</div>
<div class="a td" style="left:707px;top:758.15px;letter-spacing:0.1px">25-02-2025</div>
<div class="a td" style="left:898px;top:758.15px;letter-spacing:0.1px">14-05-2025</div>
<div class="a td" style="right:416.29999999999995px;top:758.15px;letter-spacing:0">3.699,92 €</div>
<div class="a td" style="right:224.79999999999995px;top:758.15px;letter-spacing:0">4.476,90 €</div>
<svg class="a ai2" style="left:1507px;top:758px" width="18" height="18" viewBox="0 0 18 18"><path d="M2.45 7L9.1 2.45L15.75 7V13.45a1.5 1.5 0 0 1 -1.5 1.5H3.95a1.5 1.5 0 0 1 -1.5 -1.5Z"/><path d="M2.6 7.1L9.1 11.1L15.6 7.1"/><path d="M2.7 14.5L7.1 10.3M11.1 10.3L15.5 14.5"/></svg>
<svg class="a ai2" style="left:1552px;top:758px" width="17" height="17" viewBox="0 0 17 17"><path d="M6.5 15.2H2.6a1.6 1.6 0 0 1 -1.6 -1.6V2.6a1.6 1.6 0 0 1 1.6 -1.6H7.9L12.9 5.6V9.6"/><path d="M8 1.2V4.3a.8 .8 0 0 0 .8 .8H12.7"/><path d="M8.2 13.4H13.4M11.3 11.3L13.5 13.4L11.3 15.5"/></svg>
<svg class="a" style="left:1592px;top:758px" width="17" height="17" viewBox="0 0 17 17"><path class="ai2" d="M2.8 8.6V2.6a1.6 1.6 0 0 1 1.6 -1.6H9.9L13.4 4.9V8.6"/><path class="ai2" d="M9.9 1.2V4.1a.8 .8 0 0 0 .8 .8H13.2"/><text x="1" y="16" textLength="14.8" lengthAdjust="spacingAndGlyphs" font-size="7.4" font-weight="bold" fill="#0c4a88" stroke="#0c4a88" stroke-width="0.35" font-family="Liberation Sans">XML</text></svg>
<div class="a" style="left:265px;top:794px;width:1388px;height:51px;background:#edf3fb"></div>
<div class="a" style="left:265px;top:845px;width:1388px;height:1px;background:#dedfe1"></div>
<div class="a" style="left:281px;top:810px"><svg width="18" height="18" viewBox="0 0 18 18"><rect width="18" height="18" rx="2.2" fill="#1b74d3"/><path d="M3 8.7 L7 12.5 L15 4.6" fill="none" stroke="#fff" stroke-width="1.85"/></svg></div>
<div class="a td" style="left:325px;top:810.15px;letter-spacing:0.38px">INV/000008</div>
<div class="a td" style="left:516px;top:810.15px">Marketing IT Place</div>
<div class="a td" style="left:707px;top:810.15px;letter-spacing:0.1px">25-02-2025</div>
<div class="a td" style="left:898px;top:810.15px;letter-spacing:0.1px">14-05-2025</div>
<div class="a td" style="right:416.29999999999995px;top:810.15px;letter-spacing:0">1.695,85 €</div>
<div class="a td" style="right:224.79999999999995px;top:810.15px;letter-spacing:0">1.695,85 €</div>
<svg class="a ai2" style="left:1507px;top:810px" width="18" height="18" viewBox="0 0 18 18"><path d="M2.45 7L9.1 2.45L15.75 7V13.45a1.5 1.5 0 0 1 -1.5 1.5H3.95a1.5 1.5 0 0 1 -1.5 -1.5Z"/><path d="M2.6 7.1L9.1 11.1L15.6 7.1"/><path d="M2.7 14.5L7.1 10.3M11.1 10.3L15.5 14.5"/></svg>
<svg class="a ai2" style="left:1552px;top:810px" width="17" height="17" viewBox="0 0 17 17"><path d="M6.5 15.2H2.6a1.6 1.6 0 0 1 -1.6 -1.6V2.6a1.6 1.6 0 0 1 1.6 -1.6H7.9L12.9 5.6V9.6"/><path d="M8 1.2V4.3a.8 .8 0 0 0 .8 .8H12.7"/><path d="M8.2 13.4H13.4M11.3 11.3L13.5 13.4L11.3 15.5"/></svg>
<svg class="a" style="left:1592px;top:810px" width="17" height="17" viewBox="0 0 17 17"><path class="ai2" d="M2.8 8.6V2.6a1.6 1.6 0 0 1 1.6 -1.6H9.9L13.4 4.9V8.6"/><path class="ai2" d="M9.9 1.2V4.1a.8 .8 0 0 0 .8 .8H13.2"/><text x="1" y="16" textLength="14.8" lengthAdjust="spacingAndGlyphs" font-size="7.4" font-weight="bold" fill="#0c4a88" stroke="#0c4a88" stroke-width="0.35" font-family="Liberation Sans">XML</text></svg>
<div class="a" style="left:1553px;top:780px;width:103px;height:41px;border-radius:21px;background:#0f4a89;border:2px solid #fff;box-shadow:0 3px 8px rgba(0,0,0,.18)"></div>
<div class="a" style="left:1588px;top:792.80px;font-size:15px;line-height:18px;color:#fff">Pomoc</div>
<div class="a" style="left:1533px;top:775px;width:44.5px;height:44.5px;border-radius:50%;background:linear-gradient(100deg,#2577b8,#0f4a89);border:2px solid #fff;box-shadow:0 2px 6px rgba(0,0,0,.15)"></div>
<svg class="a" style="left:1544.5px;top:787.7px" width="20" height="20" viewBox="0 0 24 24" fill="none" stroke="#fff" stroke-width="1.7" stroke-linecap="round" stroke-linejoin="round"><path d="M3 17.8l1.2 -2.6c-1.6 -1.4 -2.4 -3.1 -2.4 -5c0 -3.7 3.3 -6.6 7.4 -6.6s7.4 2.9 7.4 6.6c0 3.7 -3.3 6.6 -7.4 6.6c-1 0 -2 -.2 -2.9 -.5z"/><path d="M21.2 20.6l-.8 -2.2c1.5 -1 2.4 -2.4 2.4 -4c0 -3 -2.6 -5.2 -5.8 -5.2s-5.8 2.3 -5.8 5.2s2.6 5.2 5.8 5.2c.8 0 1.6 -.1 2.3 -.4z" fill="#1b5e9f"/><path d="M7.4 7.6h.1M10.4 7.6h.1M15.5 13.6h.1M18.4 13.6h.1" stroke-width="1.9"/></svg>
<div class="a" style="left:0;top:841px;width:1677px;height:1px;background:#111"></div>
</body></html>
